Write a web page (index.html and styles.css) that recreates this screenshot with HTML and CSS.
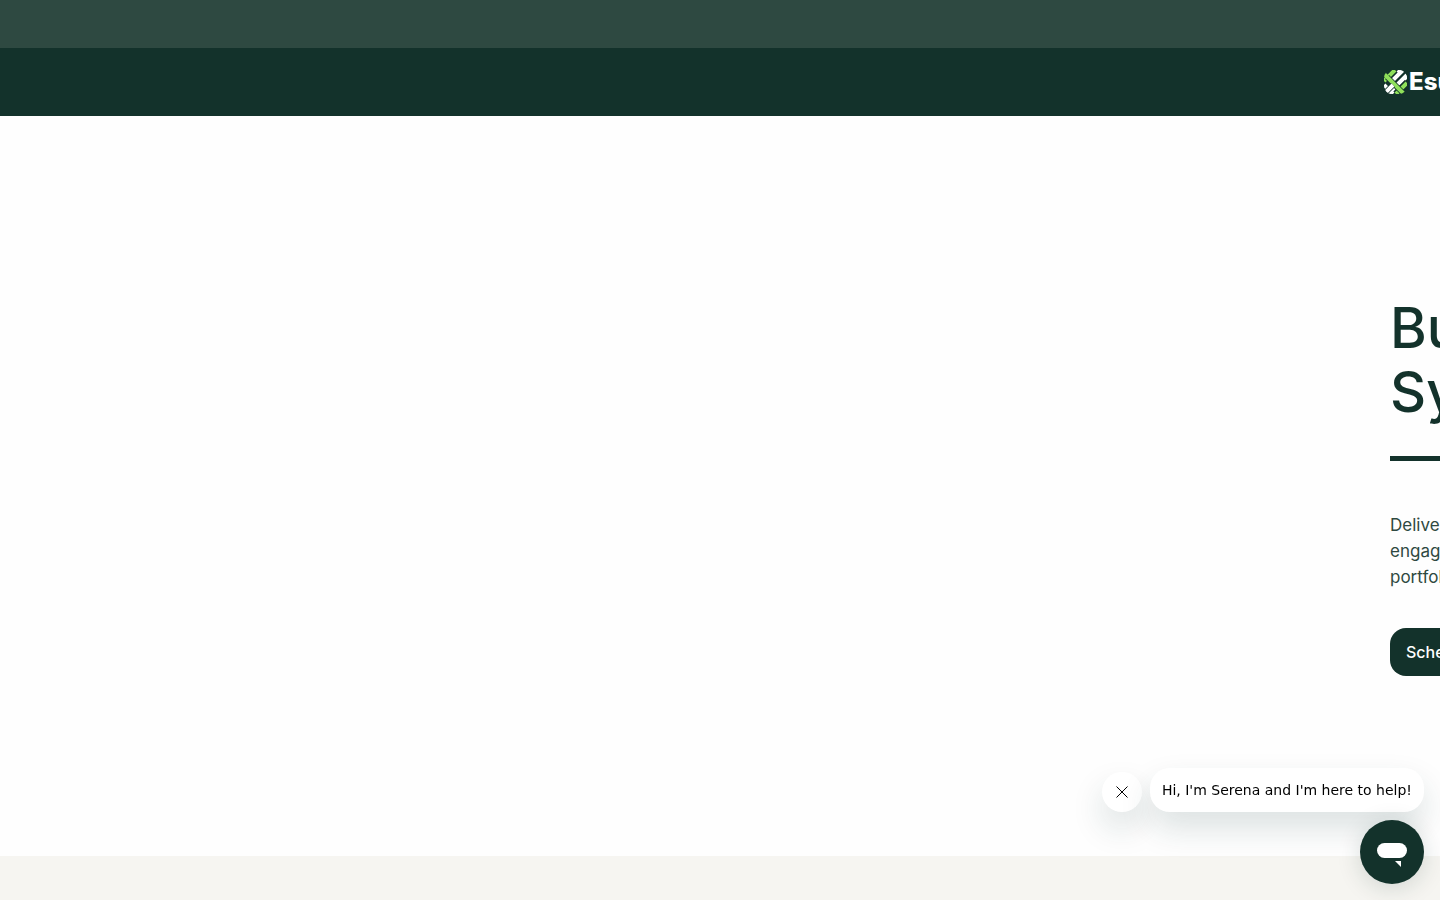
FILE: index.html
```html
<!DOCTYPE html>
<html lang="en">
<head>
<meta charset="utf-8">
<meta name="viewport" content="width=device-width, initial-scale=1">
<title>Esusu</title>
<link rel="stylesheet" href="styles.css">
</head>
<body>
<div class="announcement"></div>
<header class="navbar">
  <a class="brand" href="#">
    <svg class="brand-mark" viewBox="0 0 24 24" aria-hidden="true">
      <defs><clipPath id="mark"><rect width="23" height="24" rx="8"/></clipPath></defs>
      <g clip-path="url(#mark)" fill="none" stroke-width="4">
        <path stroke="#8fe05a" d="M0 11 11 0M12 24 23 13"/>
        <path stroke="#fff" d="M14 0 23 9M0 15 9 24"/>
        <path stroke="#13322b" stroke-width="5.4" d="M7 15 20 2M3 22 16 9"/>
        <path stroke="#fff" d="M7 12 19 0M4 24 23 5"/>
        <path stroke="#13322b" stroke-width="5.6" d="M3 7 20 24"/>
        <path stroke="#8fe05a" d="M0 4 20 24"/>
        <path stroke="#13322b" stroke-width="5.6" d="M2 22 9 15"/>
        <path stroke="#fff" d="M1 23 9 15"/>
      </g>
    </svg>
    <span>Esu</span>
  </a>
</header>
<main>
  <section class="hero">
    <div class="hero-copy">
      <h1>Bu<br>Sy</h1>
      <hr class="rule">
      <p>Deliver<br>engage<br>portfol</p>
      <button class="cta" type="button">Sche</button>
    </div>
  </section>
  <section class="next"></section>
</main>
<aside class="chat">
  <div class="chat-row">
    <button class="chat-close" type="button" aria-label="Close">
      <svg viewBox="0 0 12 12" aria-hidden="true"><path d="M.5.5l11 11M11.5.5l-11 11" stroke="#000" fill="none"/></svg>
    </button>
    <div class="chat-message">Hi, I'm Serena and I'm here to help!</div>
  </div>
  <button class="chat-launcher" type="button" aria-label="Open chat">
    <svg viewBox="0 0 64 64" aria-hidden="true"><rect x="17" y="23" width="30" height="15" rx="7.5" fill="#fff"/><path d="M35 41h6v6z" fill="#fff"/></svg>
  </button>
</aside>
</body>
</html>
```
FILE: styles.css
```css
* { box-sizing: border-box; }
body {
  margin: 0;
  height: 100vh;
  display: flex;
  flex-direction: column;
  overflow: hidden;
  background: #fff;
  color: #13322b;
  font-family: Inter, "Liberation Sans", sans-serif;
}
.announcement { flex: 0 0 48px; background: #2e4941; }
.navbar {
  flex: 0 0 68px;
  display: flex;
  align-items: center;
  justify-content: flex-end;
  background: #13322b;
}
.brand {
  width: 56px;
  display: flex;
  align-items: center;
  gap: 1px;
  overflow: hidden;
  color: #fff;
  font-size: 24px;
  line-height: 32px;
  font-weight: 800;
  text-decoration: none;
}
.brand-mark { flex: none; width: 24px; height: 24px; }
main { flex: 1; display: flex; flex-direction: column; }
.hero {
  flex: 1;
  display: flex;
  align-items: center;
  justify-content: flex-end;
  background: #fefefe;
}
.hero-copy { width: 50px; overflow: hidden; white-space: nowrap; }
h1 { margin: 0; font-size: 56px; line-height: 64px; font-weight: 500; }
.rule { margin: 32px 0 0; height: 5px; border: 0; background: #13322b; }
p { margin: 51px 0 38px; font-size: 17px; line-height: 26px; color: #2e4941; }
.cta {
  display: block;
  height: 48px;
  padding: 0 16px;
  border: 0;
  border-radius: 16px;
  background: #13322b;
  color: #fff;
  font: 500 16px/24px Inter, sans-serif;
}
.next { flex: 0 0 44px; background: #f6f5f1; }
.chat {
  position: fixed;
  right: 16px;
  bottom: 16px;
  display: flex;
  flex-direction: column;
  align-items: flex-end;
  gap: 8px;
}
.chat-row { display: flex; align-items: flex-end; gap: 8px; }
.chat-close, .chat-message {
  background: #fff;
  box-shadow: 0 16px 32px rgba(19, 60, 60, .15);
}
.chat-close {
  width: 40px;
  height: 40px;
  padding: 0;
  display: grid;
  place-items: center;
  border: 0;
  border-radius: 50%;
}
.chat-close svg { width: 12px; height: 12px; }
.chat-message {
  padding: 12px 12px 11px;
  border-radius: 20px;
  color: #000;
  font: 14px/21px "DejaVu Sans", sans-serif;
}
.chat-launcher {
  width: 64px;
  height: 64px;
  padding: 0;
  border: 0;
  border-radius: 50%;
  background: #13322b;
  box-shadow: 0 4px 24px rgba(19, 50, 43, .16);
}
.chat-launcher svg { display: block; width: 64px; height: 64px; }
```
